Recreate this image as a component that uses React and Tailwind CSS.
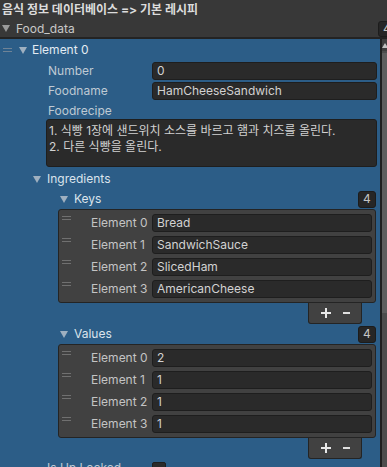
import React from "react";

const Tri = ({ c = "#9fb0c0" }) => (
  <svg width="8" height="7" viewBox="0 0 8 7" className="shrink-0">
    <polygon points="0,0 8,0 4,7" fill={c} />
  </svg>
);

const Handle = ({ c = "#6f8396" }) => (
  <div className="w-[9px] flex flex-col gap-[2px] shrink-0">
    <div className="h-[1px]" style={{ background: c }} />
    <div className="h-[1px]" style={{ background: c }} />
  </div>
);

const Field = ({ children, cls = "" }) => (
  <div
    className={
      "h-[18px] bg-[#2a2a2a] border border-[#1e1e1e] rounded-[3px] flex items-center pl-[4px] text-[#d2d2d2] " +
      cls
    }
  >
    {children}
  </div>
);

const CountBox = ({ n }) => (
  <div className="w-[18px] h-[17px] bg-[#262626] border border-[#1c1c1c] rounded-[3px] flex items-center justify-center text-[#c4c4c4] text-[12px]">
    {n}
  </div>
);

const ListBlock = ({ title, items }) => (
  <>
    <div className="h-[20px] flex items-center pl-[60px] pr-[4px]">
      <Tri />
      <span className="ml-[6px] text-[#dbe4ec]">{title}</span>
      <div className="flex-1" />
      <CountBox n={items.length} />
    </div>
    <div className="ml-[58px] mr-[4px] bg-[#414141] border border-[#242424] rounded-[3px] pt-[2px] pb-[2px]">
      {items.map((v, i) => (
        <div key={i} className="h-[22px] flex items-center pl-[3px] pr-[3px]">
          <div className="self-start mt-[4px]">
            <Handle c="#707070" />
          </div>
          <span className="ml-[20px] w-[61px] text-[#c4c4c4]">Element {i}</span>
          <Field cls="flex-1">{v}</Field>
        </div>
      ))}
    </div>
    <div className="flex justify-end pr-[18px]">
      <div className="w-[54px] h-[21px] bg-[#414141] border border-t-0 border-[#242424] rounded-b-[3px] flex items-center justify-center gap-[12px] text-[#e8e8e8]">
        <svg width="10" height="10" viewBox="0 0 10 10">
          <rect x="4" y="0" width="2" height="10" fill="#e8e8e8" />
          <rect x="0" y="4" width="10" height="2" fill="#e8e8e8" />
        </svg>
        <svg width="7" height="10" viewBox="0 0 7 10">
          <rect x="0" y="4" width="7" height="2" fill="#e0e0e0" />
        </svg>
      </div>
    </div>
  </>
);

export default function App() {
  return (
    <div className="w-[387px] h-[467px] overflow-hidden bg-[#383838] font-['Inter','Noto_Sans_CJK_KR',sans-serif] text-[12px] leading-none">
      <div className="h-[20px] flex items-center pl-[2px] font-bold text-[#dcdcdc]">
        음식 정보 데이터베이스 =&gt; 기본 레시피
      </div>
      <div className="h-[17px] flex items-center pl-[2px]">
        <Tri c="#9a9a9a" />
        <span className="ml-[6px] text-[#c8c8c8]">Food_data</span>
        <div className="flex-1" />
        <div className="w-[18px] h-[16px] mr-[-9px] bg-[#262626] border border-[#1c1c1c] rounded-[3px] flex items-center pl-[4px] text-[#c4c4c4]">
          4
        </div>
      </div>
      <div className="h-[2px] bg-[#232323]" />
      <div className="flex h-[430px] overflow-hidden">
        <div className="w-[380px] shrink-0 bg-[#2c5d87]">
          <div className="h-[22px] flex items-center pl-[3px]">
            <Handle />
            <div className="ml-[7px]">
              <Tri />
            </div>
            <span className="ml-[5px] text-[#e3ebf2]">Element 0</span>
          </div>
          <div className="h-[20px] flex items-center pl-[48px] pr-[3px]">
            <span className="w-[104px] text-[#bfcad4]">Number</span>
            <Field cls="flex-1">0</Field>
          </div>
          <div className="h-[20px] flex items-center pl-[48px] pr-[3px]">
            <span className="w-[104px] text-[#bfcad4]">Foodname</span>
            <Field cls="flex-1">HamCheeseSandwich</Field>
          </div>
          <div className="h-[18px] flex items-center pl-[48px] pt-[2px]">
            <span className="text-[#bfcad4]">Foodrecipe</span>
          </div>
          <div className="ml-[46px] mr-[3px] h-[48px] bg-[#2a2a2a] border border-[#1e1e1e] rounded-[3px] px-[2px] pt-[3px] text-[#d2d2d2] leading-[16px]">
            <div>1. 식빵 1장에 샌드위치 소스를 바르고 햄과 치즈를 올린다.</div>
            <div>2. 다른 식빵을 올린다.</div>
          </div>
          <div className="h-[22px] flex items-center pl-[33px] pt-[2px]">
            <Tri />
            <span className="ml-[6px] text-[#dbe4ec]">Ingredients</span>
          </div>
          <ListBlock
            title="Keys"
            items={["Bread", "SandwichSauce", "SlicedHam", "AmericanCheese"]}
          />
          <ListBlock title="Values" items={["2", "1", "1", "1"]} />
          <div className="h-[20px] flex items-start pl-[47px] pt-[3px]">
            <span className="w-[105px] text-[#bfcad4]">Is Up Locked</span>
            <div className="w-[14px] h-[14px] bg-[#2a2a2a] border border-[#1e1e1e] rounded-[2px] flex items-center justify-center text-[#e0e0e0] text-[10px]">
              ✓
            </div>
          </div>
        </div>
        <div className="w-[2px] shrink-0 bg-[#1f1f1f]" />
        <div className="flex-1 bg-[#4d4d4d] flex flex-col">
          <div className="h-[12px] shrink-0 bg-[#3e3e3e] flex items-center justify-center">
            <svg width="6" height="5" viewBox="0 0 6 5">
              <polygon points="3,0 6,5 0,5" fill="#c0c0c0" />
            </svg>
          </div>
          <div className="mt-[2px] h-[260px] shrink-0 bg-[#5e5e5e]" />
        </div>
      </div>
    </div>
  );
}
